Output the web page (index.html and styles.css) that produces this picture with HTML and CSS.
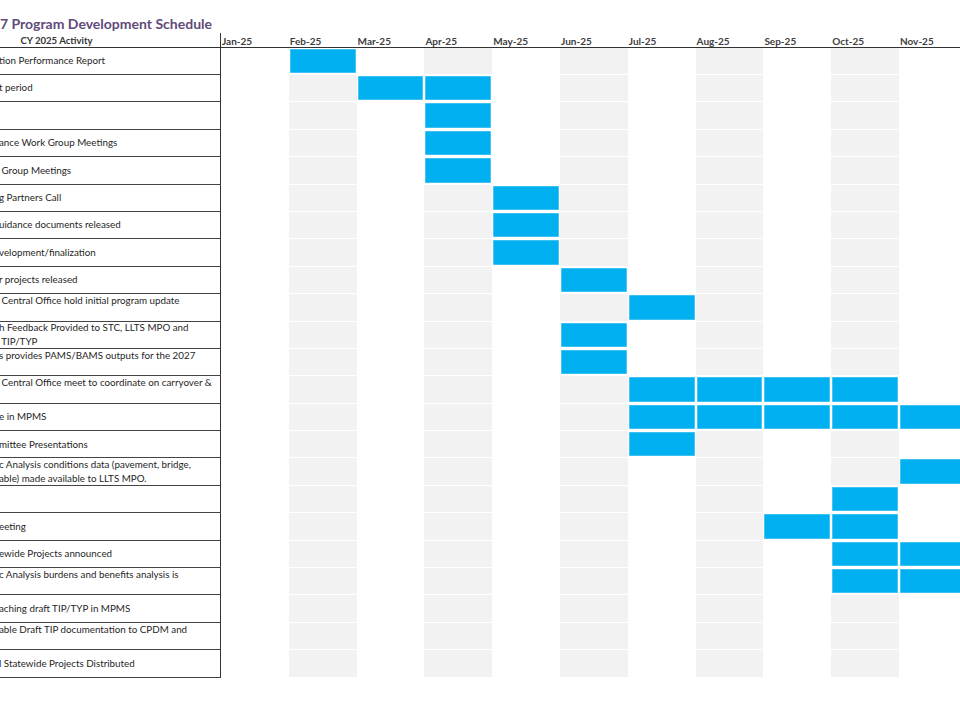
FILE: index.html
```html
<!DOCTYPE html>
<html lang="en">
<head>
<meta charset="utf-8">
<title>Program Development Schedule</title>
<link rel="stylesheet" href="styles.css">
</head>
<body>
<div class="sheet">
  <h1 class="title">7 Program Development Schedule</h1>
  <div class="row head">
    <div class="lab">CY 2025 Activity</div>
    <div class="m">Jan-25</div><div class="m">Feb-25</div><div class="m">Mar-25</div><div class="m">Apr-25</div><div class="m">May-25</div><div class="m">Jun-25</div><div class="m">Jul-25</div><div class="m">Aug-25</div><div class="m">Sep-25</div><div class="m">Oct-25</div><div class="m">Nov-25</div>
  </div>

  <div class="row"><div class="lab">tion Performance Report</div><span class="c"></span><span class="c on"></span><span class="c"></span><span class="c"></span><span class="c"></span><span class="c"></span><span class="c"></span><span class="c"></span><span class="c"></span><span class="c"></span><span class="c"></span></div>
  <div class="row"><div class="lab">t period</div><span class="c"></span><span class="c"></span><span class="c on"></span><span class="c on"></span><span class="c"></span><span class="c"></span><span class="c"></span><span class="c"></span><span class="c"></span><span class="c"></span><span class="c"></span></div>
  <div class="row"><div class="lab"></div><span class="c"></span><span class="c"></span><span class="c"></span><span class="c on"></span><span class="c"></span><span class="c"></span><span class="c"></span><span class="c"></span><span class="c"></span><span class="c"></span><span class="c"></span></div>
  <div class="row"><div class="lab">ance Work Group Meetings</div><span class="c"></span><span class="c"></span><span class="c"></span><span class="c on"></span><span class="c"></span><span class="c"></span><span class="c"></span><span class="c"></span><span class="c"></span><span class="c"></span><span class="c"></span></div>
  <div class="row"><div class="lab">&nbsp;Group Meetings</div><span class="c"></span><span class="c"></span><span class="c"></span><span class="c on"></span><span class="c"></span><span class="c"></span><span class="c"></span><span class="c"></span><span class="c"></span><span class="c"></span><span class="c"></span></div>
  <div class="row"><div class="lab">g Partners Call</div><span class="c"></span><span class="c"></span><span class="c"></span><span class="c"></span><span class="c on"></span><span class="c"></span><span class="c"></span><span class="c"></span><span class="c"></span><span class="c"></span><span class="c"></span></div>
  <div class="row"><div class="lab">uidance documents released</div><span class="c"></span><span class="c"></span><span class="c"></span><span class="c"></span><span class="c on"></span><span class="c"></span><span class="c"></span><span class="c"></span><span class="c"></span><span class="c"></span><span class="c"></span></div>
  <div class="row"><div class="lab">velopment/finalization</div><span class="c"></span><span class="c"></span><span class="c"></span><span class="c"></span><span class="c on"></span><span class="c"></span><span class="c"></span><span class="c"></span><span class="c"></span><span class="c"></span><span class="c"></span></div>
  <div class="row"><div class="lab">r projects released</div><span class="c"></span><span class="c"></span><span class="c"></span><span class="c"></span><span class="c"></span><span class="c on"></span><span class="c"></span><span class="c"></span><span class="c"></span><span class="c"></span><span class="c"></span></div>
  <div class="row"><div class="lab two">&nbsp;Central Office hold initial program update</div><span class="c"></span><span class="c"></span><span class="c"></span><span class="c"></span><span class="c"></span><span class="c"></span><span class="c on"></span><span class="c"></span><span class="c"></span><span class="c"></span><span class="c"></span></div>
  <div class="row"><div class="lab">h Feedback Provided to STC, LLTS MPO and<br>&nbsp;TIP/TYP</div><span class="c"></span><span class="c"></span><span class="c"></span><span class="c"></span><span class="c"></span><span class="c on"></span><span class="c"></span><span class="c"></span><span class="c"></span><span class="c"></span><span class="c"></span></div>
  <div class="row"><div class="lab two">s provides PAMS/BAMS outputs for the 2027</div><span class="c"></span><span class="c"></span><span class="c"></span><span class="c"></span><span class="c"></span><span class="c on"></span><span class="c"></span><span class="c"></span><span class="c"></span><span class="c"></span><span class="c"></span></div>
  <div class="row"><div class="lab two">&nbsp;Central Office meet to coordinate on carryover &amp;</div><span class="c"></span><span class="c"></span><span class="c"></span><span class="c"></span><span class="c"></span><span class="c"></span><span class="c on"></span><span class="c on"></span><span class="c on"></span><span class="c on"></span><span class="c"></span></div>
  <div class="row"><div class="lab">e in MPMS</div><span class="c"></span><span class="c"></span><span class="c"></span><span class="c"></span><span class="c"></span><span class="c"></span><span class="c on"></span><span class="c on"></span><span class="c on"></span><span class="c on"></span><span class="c on"></span></div>
  <div class="row"><div class="lab">mittee Presentations</div><span class="c"></span><span class="c"></span><span class="c"></span><span class="c"></span><span class="c"></span><span class="c"></span><span class="c on"></span><span class="c"></span><span class="c"></span><span class="c"></span><span class="c"></span></div>
  <div class="row"><div class="lab">c Analysis conditions data (pavement, bridge,<br>able) made available to LLTS MPO.</div><span class="c"></span><span class="c"></span><span class="c"></span><span class="c"></span><span class="c"></span><span class="c"></span><span class="c"></span><span class="c"></span><span class="c"></span><span class="c"></span><span class="c on"></span></div>
  <div class="row"><div class="lab"></div><span class="c"></span><span class="c"></span><span class="c"></span><span class="c"></span><span class="c"></span><span class="c"></span><span class="c"></span><span class="c"></span><span class="c"></span><span class="c on"></span><span class="c"></span></div>
  <div class="row"><div class="lab">eeting</div><span class="c"></span><span class="c"></span><span class="c"></span><span class="c"></span><span class="c"></span><span class="c"></span><span class="c"></span><span class="c"></span><span class="c on"></span><span class="c on"></span><span class="c"></span></div>
  <div class="row"><div class="lab">ewide Projects announced</div><span class="c"></span><span class="c"></span><span class="c"></span><span class="c"></span><span class="c"></span><span class="c"></span><span class="c"></span><span class="c"></span><span class="c"></span><span class="c on"></span><span class="c on"></span></div>
  <div class="row"><div class="lab two">c Analysis burdens and benefits analysis is</div><span class="c"></span><span class="c"></span><span class="c"></span><span class="c"></span><span class="c"></span><span class="c"></span><span class="c"></span><span class="c"></span><span class="c"></span><span class="c on"></span><span class="c on"></span></div>
  <div class="row"><div class="lab">aching draft TIP/TYP in MPMS</div><span class="c"></span><span class="c"></span><span class="c"></span><span class="c"></span><span class="c"></span><span class="c"></span><span class="c"></span><span class="c"></span><span class="c"></span><span class="c"></span><span class="c"></span></div>
  <div class="row"><div class="lab two">able Draft TIP documentation to CPDM and</div><span class="c"></span><span class="c"></span><span class="c"></span><span class="c"></span><span class="c"></span><span class="c"></span><span class="c"></span><span class="c"></span><span class="c"></span><span class="c"></span><span class="c"></span></div>
  <div class="row"><div class="lab">l Statewide Projects Distributed</div><span class="c"></span><span class="c"></span><span class="c"></span><span class="c"></span><span class="c"></span><span class="c"></span><span class="c"></span><span class="c"></span><span class="c"></span><span class="c"></span><span class="c"></span></div>
</div>
</body>
</html>
```
FILE: styles.css
```css
html, body {
  margin: 0;
  padding: 0;
  background: #fff;
  overflow: hidden;
}
body {
  font-family: Lato, "Liberation Sans", sans-serif;
  color: #1f1f1f;
}
.sheet {
  width: 960px;
}
.title {
  margin: 0;
  height: 33px;
  box-sizing: border-box;
  padding-top: 15px;
  font-size: 14px;
  line-height: 17px;
  font-weight: 700;
  color: #5f4a7a;
  white-space: nowrap;
}
.row {
  display: grid;
  grid-template-columns: 221px repeat(11, 67.8px);
  height: 27.4px;
}
.lab {
  box-sizing: border-box;
  border-right: 1px solid #333;
  border-bottom: 1px solid #444;
  font-size: 9.8px;
  line-height: 13.5px;
  display: flex;
  flex-direction: column;
  justify-content: center;
  white-space: nowrap;
  overflow: hidden;
  margin-left: -1px;
}
.lab.two {
  padding-bottom: 13.5px;
}
.head {
  height: 14.6px;
  box-sizing: border-box;
  border-bottom: 1px solid #333;
}
.head .lab {
  border-bottom: 0;
  font-weight: 700;
  font-size: 9.6px;
  padding-right: 106px;
  text-align: center;
  color: #333;
  justify-content: flex-end;
  line-height: 12px;
}
.m {
  font-size: 10px;
  font-weight: 700;
  color: #404040;
  padding-left: 1px;
  line-height: 12px;
  align-self: end;
}
.c {
  box-sizing: border-box;
  border-bottom: 1px solid #fff;
}
.c:nth-child(odd) {
  background: #f2f2f2;
}
.c.on {
  background: #00b0f0;
  box-shadow: inset 0 0 0 1px #fff, inset 0 0 0 1.6px #79d2f5;
}
```
